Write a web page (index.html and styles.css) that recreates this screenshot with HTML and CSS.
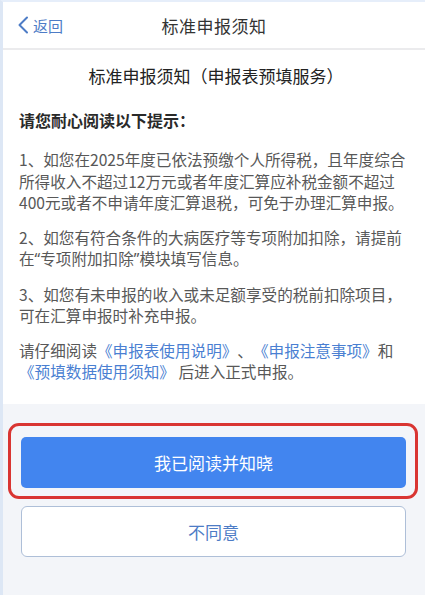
FILE: index.html
```html
<!DOCTYPE html>
<html lang="zh-CN">
<head>
<meta charset="utf-8">
<title>标准申报须知</title>
<link rel="stylesheet" href="styles.css">
</head>
<body>
<div class="screen">
  <header class="nav">
    <a class="back" href="#">
      <svg class="back-icon" viewBox="0 0 12 18" width="12" height="18"><path d="M10 1.5 L2.5 9 L10 16.5" fill="none" stroke="currentColor" stroke-width="2" stroke-linecap="round" stroke-linejoin="round"/></svg>
      <span>返回</span>
    </a>
    <h1 class="nav-title">标准申报须知</h1>
  </header>

  <main class="notice">
    <h2 class="notice-title">标准申报须知（申报表预填服务）</h2>
    <p class="notice-lead">请您耐心阅读以下提示：</p>
    <p class="notice-item">1、如您在2025年度已依法预缴个人所得税，且年度综合<br>所得收入不超过12万元或者年度汇算应补税金额不超过<br>400元或者不申请年度汇算退税，可免于办理汇算申报。</p>
    <p class="notice-item">2、如您有符合条件的大病医疗等专项附加扣除，请提前<br>在<span class="q">“</span>专项附加扣除<span class="q">”</span>模块填写信息。</p>
    <p class="notice-item">3、如您有未申报的收入或未足额享受的税前扣除项目，<br>可在汇算申报时补充申报。</p>
    <p class="notice-item">请仔细阅读<a class="doc-link" href="#">《申报表使用说明》</a>、<a class="doc-link" href="#">《申报注意事项》</a>和<br><a class="doc-link" href="#">《预填数据使用须知》</a> 后进入正式申报。</p>
  </main>

  <footer class="actions">
    <button class="btn btn-primary" type="button">我已阅读并知晓</button>
    <button class="btn btn-outline" type="button">不同意</button>
  </footer>
</div>
</body>
</html>
```

FILE: styles.css
```css
* {
  box-sizing: border-box;
}

html,
body {
  margin: 0;
  padding: 0;
  height: 100%;
}

body {
  font-family: "Noto Sans CJK SC", "Noto Sans", sans-serif;
  background: #f3f5f9;
  text-spacing-trim: space-all;
}

.screen {
  min-height: 100%;
  display: flex;
  flex-direction: column;
  background: #f3f5f9;
  border-left: 3px solid #dde7f5;
  border-top: 2px solid #e6eefa;
}

/* top navigation bar */
.nav {
  position: relative;
  height: 48px;
  display: flex;
  align-items: center;
  justify-content: center;
  background: #fff;
  border-bottom: 2px solid #ebebed;
}

.back {
  position: absolute;
  left: 14px;
  top: 0;
  height: 100%;
  display: flex;
  align-items: center;
  gap: 4px;
  color: #4d7cc6;
  text-decoration: none;
  font-size: 15px;
}

.back-icon {
  display: block;
}

.nav-title {
  margin: 0;
  font-size: 17px;
  font-weight: 400;
  color: #333;
  letter-spacing: 0.5px;
}

/* notice body */
.notice {
  background: #fff;
  padding: 14px 12px 21px 16px;
}

.notice-title {
  margin: 0 0 21px;
  text-align: center;
  font-size: 17px;
  line-height: 24px;
  font-weight: 400;
  color: #222;
}

.notice-lead {
  margin: 0 0 18px;
  font-size: 16px;
  line-height: 22px;
  font-weight: 700;
  color: #2a2a2a;
}

.notice-item {
  margin: 0 0 13px;
  font-size: 15.6px;
  line-height: 21.5px;
  color: #585858;
  white-space: nowrap;
}

.notice-item:last-child {
  margin-bottom: 0;
}

/* narrow western quotes */
.q {
  font-family: "Noto Sans", sans-serif;
}

.doc-link {
  color: #4a7fd2;
  text-decoration: none;
}

/* bottom buttons */
.actions {
  flex: 1;
  display: flex;
  flex-direction: column;
  gap: 18px;
  padding: 33px 19px 30px 18px;
}

.btn {
  height: 51px;
  width: 100%;
  font-family: inherit;
  font-size: 17px;
  border-radius: 5px;
  cursor: pointer;
}

.btn-primary {
  position: relative;
  border: none;
  background: #4285ef;
  color: #fff;
}

/* red highlight ring drawn around the confirm button */
.btn-primary::after {
  content: "";
  position: absolute;
  inset: -14px -12px -11px -13px;
  border: 3px solid #d93532;
  border-radius: 11px;
  pointer-events: none;
}

.btn-outline {
  background: #fff;
  border: 1px solid #aebfd8;
  color: #4d7cc6;
  border-radius: 6px;
}
```
